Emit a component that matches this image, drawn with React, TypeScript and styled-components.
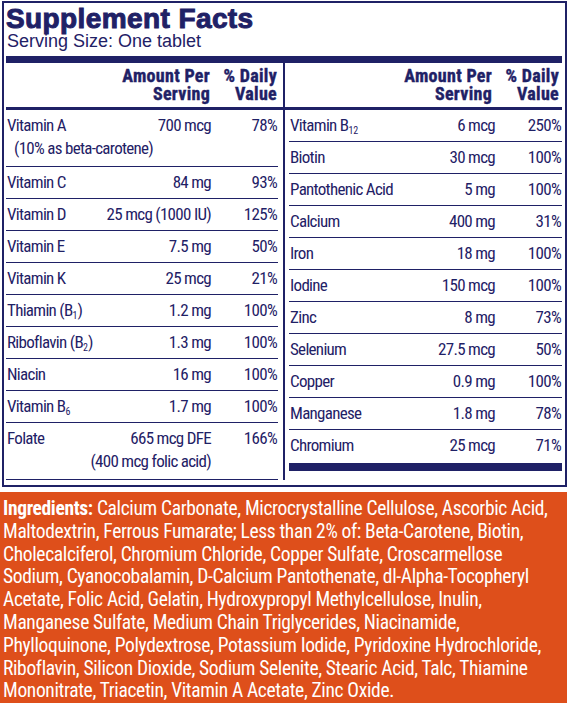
import React from "react";
import styled, { createGlobalStyle } from "styled-components";

const NAVY = "#1f2166";
const ORANGE = "#de4f1b";
const NARROW = `"Liberation Sans Narrow", "Roboto Condensed", "DejaVu Sans Condensed", "Liberation Sans", sans-serif`;

// subscript used inside the data below, so it has to exist first
const Sub = styled.sub`
    font-size: 10px;
    line-height: 0;
    vertical-align: -3px;
    letter-spacing: 0;
`

interface Nutrient {
    name: React.ReactNode;
    note?: string;
    amount: string;
    amountNote?: string;
    dv: string;
}

type Side = "left" | "right";

const leftRows: Nutrient[] = [
    { name: "Vitamin A", note: "(10% as beta-carotene)", amount: "700 mcg", dv: "78%" },
    { name: "Vitamin C", amount: "84 mg", dv: "93%" },
    { name: "Vitamin D", amount: "25 mcg (1000 IU)", dv: "125%" },
    { name: "Vitamin E", amount: "7.5 mg", dv: "50%" },
    { name: "Vitamin K", amount: "25 mcg", dv: "21%" },
    { name: <>Thiamin (B<Sub>1</Sub>)</>, amount: "1.2 mg", dv: "100%" },
    { name: <>Riboflavin (B<Sub>2</Sub>)</>, amount: "1.3 mg", dv: "100%" },
    { name: "Niacin", amount: "16 mg", dv: "100%" },
    { name: <>Vitamin B<Sub>6</Sub></>, amount: "1.7 mg", dv: "100%" },
    { name: "Folate", amount: "665 mcg DFE", amountNote: "(400 mcg folic acid)", dv: "166%" },
];

const rightRows: Nutrient[] = [
    { name: <>Vitamin B<Sub>12</Sub></>, amount: "6 mcg", dv: "250%" },
    { name: "Biotin", amount: "30 mcg", dv: "100%" },
    { name: "Pantothenic Acid", amount: "5 mg", dv: "100%" },
    { name: "Calcium", amount: "400 mg", dv: "31%" },
    { name: "Iron", amount: "18 mg", dv: "100%" },
    { name: "Iodine", amount: "150 mcg", dv: "100%" },
    { name: "Zinc", amount: "8 mg", dv: "73%" },
    { name: "Selenium", amount: "27.5 mcg", dv: "50%" },
    { name: "Copper", amount: "0.9 mg", dv: "100%" },
    { name: "Manganese", amount: "1.8 mg", dv: "78%" },
    { name: "Chromium", amount: "25 mcg", dv: "71%" },
];

const ingredientLines = [
    "Maltodextrin, Ferrous Fumarate; Less than 2% of: Beta-Carotene, Biotin,",
    "Cholecalciferol, Chromium Chloride, Copper Sulfate, Croscarmellose",
    "Sodium, Cyanocobalamin, D-Calcium Pantothenate, dl-Alpha-Tocopheryl",
    "Acetate, Folic Acid, Gelatin, Hydroxypropyl Methylcellulose, Inulin,",
    "Manganese Sulfate, Medium Chain Triglycerides, Niacinamide,",
    "Phylloquinone, Polydextrose, Potassium Iodide, Pyridoxine Hydrochloride,",
    "Riboflavin, Silicon Dioxide, Sodium Selenite, Stearic Acid, Talc, Thiamine",
    "Mononitrate, Triacetin, Vitamin A Acetate, Zinc Oxide.",
];

const NutrientTable: React.FC<{ rows: Nutrient[]; side: Side; closed?: boolean }> = ({ rows, side, closed }) => (
    <Half $side={side}>
        <HeaderRow $side={side}>
            <span />
            <HeadAmount>Amount Per<br />Serving</HeadAmount>
            <div>% Daily<br />Value</div>
        </HeaderRow>
        {rows.map((r, i) => (
            <Row key={i} $side={side} $tall={!!(r.note || r.amountNote)} $last={closed && i === rows.length - 1}>
                <Name>
                    {r.name}
                    {r.note && <Note>{r.note}</Note>}
                </Name>
                <Amount>
                    {r.amount}
                    {r.amountNote && <><br />{r.amountNote}</>}
                </Amount>
                <Daily>{r.dv}</Daily>
            </Row>
        ))}
        {closed && <EndBar />}
    </Half>
);

const App: React.FC = () => {
    return (
        <Page>
            <GlobalStyle />
            <Panel>
                <Title>Supplement Facts</Title>
                <Serving>Serving Size: One tablet</Serving>
                <TopBar />
                <Columns>
                    <NutrientTable rows={leftRows} side="left" />
                    <NutrientTable rows={rightRows} side="right" closed />
                </Columns>
            </Panel>
            <Ingredients>
                <Line><b>Ingredients:</b> Calcium Carbonate, Microcrystalline Cellulose, Ascorbic Acid,</Line>
                {ingredientLines.map((l) => (
                    <Line key={l}>{l}</Line>
                ))}
            </Ingredients>
        </Page>
    );
};

export default App;


const GlobalStyle = createGlobalStyle`
    html, body {
        margin: 0;
        padding: 0;
        background: #fff;
        overflow: hidden;
    }
`

const Page = styled.div`
    width: 571px;
    height: 703px;
    overflow: hidden;
    background: #fff;
`

const Panel = styled.section`
    margin: 1px 4px 0 2px;
    border: 2px solid ${NAVY};
    padding: 0 3px 5px 2px;
    color: ${NAVY};
`

const Title = styled.h1`
    margin: 3px 0 0;
    font-family: "Liberation Sans", Arial, sans-serif;
    font-weight: 700;
    font-size: 28px;
    line-height: 26px;
    letter-spacing: 0.4px;
    -webkit-text-stroke: 1px ${NAVY};
`

const Serving = styled.div`
    margin-left: 1px;
    font-family: "Liberation Sans", Arial, sans-serif;
    font-size: 18px;
    line-height: 16px;
    padding: 1px 0 7px;
`

const TopBar = styled.div`
    height: 7px;
    background: ${NAVY};
`

const Columns = styled.div`
    display: grid;
    grid-template-columns: 277px 1fr;
    align-items: start;
    font-family: ${NARROW};
`

const Half = styled.div<{ $side: Side }>`
    display: flex;
    flex-direction: column;
    align-self: stretch;
    border-left: ${p => (p.$side === "right" ? `2px solid ${NAVY}` : "none")};
`

const rowGrid = `
    display: grid;
    grid-template-columns: 1fr auto 66px;
    align-items: start;
`

const HeaderRow = styled.div<{ $side: Side }>`
    ${rowGrid}
    padding: 4px ${p => (p.$side === "left" ? "6px" : "3px")} 4px 0;
    border-bottom: 3px solid ${NAVY};
    font-weight: 700;
    font-size: 18px;
    letter-spacing: 0.3px;
    line-height: 18px;
    text-align: right;
    -webkit-text-stroke: 0.4px ${NAVY};
`

const HeadAmount = styled.div`
    padding-right: 1px;
`

const Row = styled.div<{ $side: Side; $tall: boolean; $last?: boolean }>`
    ${rowGrid}
    margin: ${p => (p.$side === "left" ? "0 5px 0 0" : "0 0 0 4px")};
    padding: 4px 1px ${p => (p.$tall ? "6px" : "4px")} 1px;
    border-bottom: ${p => (p.$last ? "none" : `1px solid ${NAVY}`)};
    font-size: 17px;
    letter-spacing: -0.7px;
    line-height: 23px;
`

const Name = styled.div`
    white-space: nowrap;
`

const Note = styled.div`
    padding-left: 7px;
`

const Amount = styled.div`
    text-align: right;
    white-space: nowrap;
`

const Daily = styled.div`
    text-align: right;
`

const EndBar = styled.div`
    height: 8px;
    margin: 2px 0 0 4px;
    background: ${NAVY};
`

const Ingredients = styled.section`
    margin: 5px 4px 0 0;
    padding: 6px 0 0 3px;
    height: 220px;
    background: ${ORANGE};
    color: #fff;
    font-family: ${NARROW};
    font-size: 19.5px;
    letter-spacing: -0.35px;
    line-height: 22.8px;

    & b {
        font-weight: 700;
    }
`

const Line = styled.span`
    display: block;
    white-space: nowrap;
`
